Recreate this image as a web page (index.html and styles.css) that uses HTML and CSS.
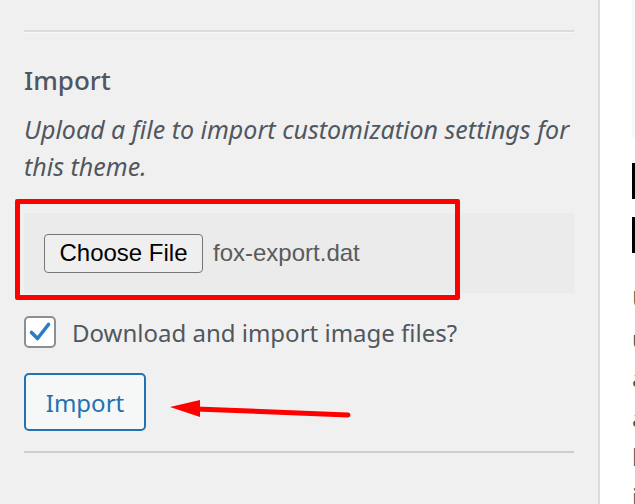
FILE: index.html
```html
<!DOCTYPE html>
<html lang="en">
<head>
<meta charset="utf-8">
<title>Import</title>
<link rel="stylesheet" href="styles.css">
</head>
<body>
<div class="layout">
  <section class="panel">
    <hr class="rule">
    <h3 class="title">Import</h3>
    <p class="desc">Upload a file to import customization settings for this theme.</p>
    <div class="file-row">
      <button class="file-btn" type="button">Choose File</button>
      <span class="file-name">fox-export.dat</span>
    </div>
    <label class="check-row">
      <span class="check"><svg viewBox="0 0 24 24" width="24" height="24"><path d="M3.5 12.5 L9.5 18.5 L20.5 4.5" fill="none" stroke="#2c7bc4" stroke-width="3.6" stroke-linecap="round" stroke-linejoin="round"/></svg></span>
      <span class="check-label">Download and import image files?</span>
    </label>
    <button class="import-btn" type="button">Import</button>
    <hr class="rule rule-bottom">

    <div class="highlight"></div>
    <svg class="arrow" width="190" height="24" viewBox="0 0 190 24">
      <line x1="26" y1="9" x2="178" y2="15" stroke="#ff0000" stroke-width="5" stroke-linecap="round"/>
      <polygon points="0,7 30,0 30,17" fill="#ff0000"/>
    </svg>
  </section>
  <aside class="side">
    <div class="thumb"></div>
    <div class="bar"></div>
    <div class="bar"></div>
    <ul class="lines">
      <li>Upload</li>
      <li>use</li>
      <li>and</li>
      <li>and</li>
      <li>library</li>
      <li>import</li>
    </ul>
  </aside>
</div>
</body>
</html>
```

FILE: styles.css
```css
html, body {
  margin: 0;
  padding: 0;
}

body {
  width: 635px;
  height: 504px;
  overflow: hidden;
  background: #f0f0f0;
  font-family: "Noto Sans", "Open Sans", sans-serif;
  color: #50575e;
}

.layout {
  display: flex;
  height: 504px;
}

.panel {
  position: relative;
  width: 550px;
  flex: 0 0 550px;
  padding: 30px 24px 0 24px;
  border-right: 2px solid #dcdcdc;
}

.rule {
  margin: 0;
  height: 2px;
  border: 0;
  background: #dcdcdc;
  border-bottom: 1px solid #f8f8f8;
}

.rule-bottom {
  margin-top: 20px;
  background: #cdcdcd;
  border-bottom: 0;
}

.title {
  margin: 29px 0 0;
  font-size: 26px;
  line-height: 36px;
  font-weight: 500;
  color: #50575e;
}

.desc {
  margin: 13px 0 0;
  font-size: 25px;
  line-height: 37px;
  font-style: italic;
  color: #50575e;
}

.file-row {
  margin-top: 28px;
  height: 80px;
  display: flex;
  align-items: center;
  gap: 10px;
  padding-left: 20px;
  background: #ebebeb;
}

.file-btn {
  width: 159px;
  height: 39px;
  padding: 0;
  font-family: "Liberation Sans", Arial, sans-serif;
  font-size: 24px;
  color: #000;
  background: #efefef;
  border: 1px solid #767676;
  border-radius: 4px;
}

.file-name {
  font-family: "Liberation Sans", Arial, sans-serif;
  font-size: 24px;
  color: #5a5a5a;
}

.check-row {
  display: flex;
  align-items: center;
  gap: 16px;
  margin-top: 22px;
}

.check {
  width: 28px;
  height: 28px;
  border: 2px solid #8c8f94;
  border-radius: 5px;
  background: #fff;
  display: flex;
  align-items: center;
  justify-content: center;
}

.check-label {
  font-size: 24px;
  line-height: 32px;
  padding-top: 2px;
  color: #50575e;
}

.import-btn {
  display: block;
  margin-top: 24px;
  width: 122px;
  height: 58px;
  padding: 0;
  font-family: "Noto Sans", "Open Sans", sans-serif;
  font-size: 24px;
  color: #2271b1;
  background: #f6f7f7;
  border: 2px solid #2271b1;
  border-radius: 5px;
}

/* annotation overlays */
.highlight {
  position: absolute;
  left: 15px;
  top: 199px;
  width: 435px;
  height: 91px;
  border: 5px solid #ff0000;
  border-radius: 2px;
}

.arrow {
  position: absolute;
  left: 170px;
  top: 400px;
}

.side {
  flex: 1;
  background: #fff;
  padding-left: 32px;
  overflow: hidden;
}

.thumb {
  height: 137px;
  background: #f6f7f7;
}

.bar {
  width: 40px;
  height: 36px;
  margin-top: 26px;
  background: #000;
}

.bar + .bar {
  margin-top: 18px;
}

.lines {
  list-style: none;
  margin: 26px 0 0;
  padding: 0;
  font-size: 24px;
  line-height: 39.5px;
  color: #555;
}
```
